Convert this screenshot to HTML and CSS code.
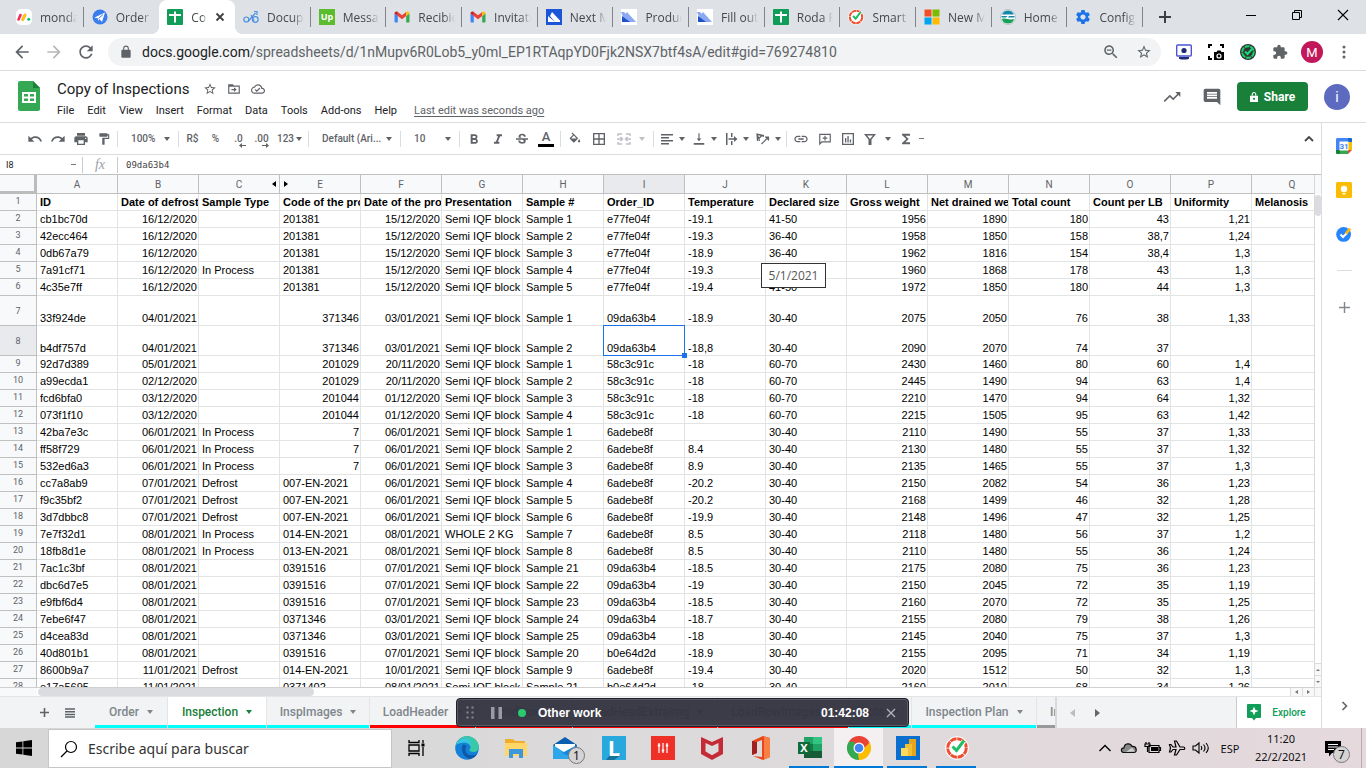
FILE: index.html
```html
<!DOCTYPE html>
<html lang="en">
<head>
<meta charset="utf-8">
<title>Copy of Inspections</title>
<link rel="stylesheet" href="styles.css">
</head>
<body>

<svg class="defs" aria-hidden="true">
  <symbol id="gmail" viewBox="0 0 16 16"><path fill="#4285f4" d="M1 13.500h2.800V7L0.500 4.500v8.300z"/><path fill="#34a853" d="M12.200 13.500H15l.5-.7V4.500L12.200 7z"/><path fill="#ea4335" d="M3.800 7V3L8 6.200 12.200 3v4L8 10.200z"/><path fill="#c5221f" d="M.5 4.500C.5 2.800 2.300 2 3.800 3v4z"/><path fill="#fbbc04" d="M15.500 4.500c0-1.700-1.800-2.500-3.300-1.500v4z"/></symbol>
  <symbol id="sheets" viewBox="0 0 16 16"><rect width="16" height="16" rx="1" fill="#0f9d58"/><path fill="#fff" d="M7 2.500h2V5h5v2H9v6.500H7V7H2V5h5z"/></symbol>
  <symbol id="boat" viewBox="0 0 16 16"><path fill="#8ba9f2" d="M6 3l9 10H8L3 7zM0 3l3 0 9 10H4z"/><path fill="#1f52c8" d="M1 7l8 6H1z"/></symbol>
  <symbol id="clockcheck" viewBox="0 0 24 24"><circle cx="12" cy="12" r="11.800" fill="#fff"/><circle cx="12" cy="12" r="9.300" fill="none" stroke="#f04e30" stroke-width="3" stroke-dasharray="6.600 .7"/><path d="M7.500 11l4 4L19 5" fill="none" stroke="#fff" stroke-width="5"/><path d="M7.500 10.500l4 4L19 4.500" fill="none" stroke="#1fbf63" stroke-width="3"/></symbol>
  <symbol id="star" viewBox="0 0 24 24"><path d="M22 9.240l-7.190-.62L12 2 9.190 8.630 2 9.240l5.460 4.730L5.820 21 12 17.270 18.180 21l-1.630-7.030L22 9.240zM12 15.400l-3.760 2.270 1-4.280-3.320-2.880 4.380-.38L12 6.100l1.710 4.040 4.380.38-3.320 2.880 1 4.280L12 15.400z"/></symbol>
  <symbol id="lock" viewBox="0 0 24 24"><path d="M18 8h-1V6c0-2.760-2.240-5-5-5S7 3.240 7 6v2H6c-1.100 0-2 .9-2 2v10c0 1.100.9 2 2 2h12c1.100 0 2-.9 2-2V10c0-1.100-.9-2-2-2zM15.100 8H8.900V6c0-1.710 1.390-3.100 3.100-3.100 1.710 0 3.100 1.390 3.100 3.100v2z"/></symbol>
</svg>

<header class="tabstrip">
  <nav class="tabs" aria-label="Browser tabs">
    <a class="tab" href="#"><svg class="fav" viewBox="0 0 16 16"><rect width="16" height="16" rx="5" fill="#fff"/><path d="M2.500 10.500L4.500 6M6.800 10.500L9 6" stroke-linecap="round" stroke-width="2.600" stroke="#f62b54"/><path d="M6.800 10.500L9 6" stroke-linecap="round" stroke-width="2.600" stroke="#ffcb00"/><circle cx="12.700" cy="10.300" r="1.500" fill="#00ca72"/></svg><span>monday</span></a>
    <a class="tab last-before" href="#"><svg class="fav" viewBox="0 0 16 16"><circle cx="8" cy="8" r="7.500" fill="#3b7ded"/><path fill="#fff" d="M2.500 8.500L13 3.500 10 13 7.500 10 6 12V9.500z"/><path stroke="#3b7ded" d="M6.500 9.500L11 5.500"/></svg><span>Order I</span></a>
    <a class="tab active" href="#" aria-current="page"><svg class="fav"><use href="#sheets"/></svg><span>Copy</span><svg class="close" viewBox="0 0 10 10"><path d="M1.500 1.500l7 7M8.500 1.500l-7 7" stroke="#3c4043" stroke-width="1.800"/></svg></a>
    <a class="tab" href="#"><svg class="fav" viewBox="0 0 16 16" fill="none" stroke="#4a90e2" stroke-width="1.200"><circle cx="3.300" cy="10.500" r="2.500"/><circle cx="12.300" cy="10.500" r="2.800"/><path d="M5 12.500L12.500 4M8 6l3 6M11 2.500h3V6"/></svg><span>Docupil</span></a>
    <a class="tab" href="#"><svg class="fav" viewBox="0 0 16 16"><rect width="16" height="16" fill="#5bbc2e"/><text x="8" y="11" text-anchor="middle" class="up">Up</text></svg><span>Messag</span></a>
    <a class="tab" href="#"><svg class="fav"><use href="#gmail"/></svg><span>Recibid</span></a>
    <a class="tab" href="#"><svg class="fav"><use href="#gmail"/></svg><span>Invitati</span></a>
    <a class="tab" href="#"><svg class="fav" viewBox="0 0 16 16"><rect width="16" height="16" fill="#1b55d8"/><path fill="#fff" d="M6 3l8 8.500V13H9L4 7zM2 7l7 6H2z"/></svg><span>Next M</span></a>
    <a class="tab" href="#"><svg class="fav" viewBox="0 0 16 16"><rect width="16" height="16" fill="#fff"/><use href="#boat"/></svg><span>Produc</span></a>
    <a class="tab" href="#"><svg class="fav" viewBox="0 0 16 16"><rect width="16" height="16" fill="#fff"/><use href="#boat"/></svg><span>Fill out</span></a>
    <a class="tab" href="#"><svg class="fav"><use href="#sheets"/></svg><span>Roda P</span></a>
    <a class="tab" href="#"><svg class="fav"><use href="#clockcheck"/></svg><span>Smart</span></a>
    <a class="tab" href="#"><svg class="fav" viewBox="0 0 16 16"><path fill="#f25022" d="M.5.5h7v7h-7z"/><path fill="#7fba00" d="M8.500.5h7v7h-7z"/><path fill="#00a4ef" d="M.5 8.500h7v7h-7z"/><path fill="#ffb900" d="M8.500 8.500h7v7h-7z"/></svg><span>New M</span></a>
    <a class="tab" href="#"><svg class="fav" viewBox="0 0 16 16"><circle cx="8" cy="8" r="7.500" fill="#fff" stroke="#9aa" stroke-width=".6"/><path fill="#1787a8" d="M2 5.500a6.500 6.500 0 0 1 12 0zM1.500 7h6l-1.500 1.500h-4.500zM9 7h5.500v1.500H8z"/><path fill="#17a05a" d="M1.800 10c4-1.500 7 1.500 12.400 0a6.500 6.500 0 0 1-12.400 0z"/></svg><span>Home</span></a>
    <a class="tab" href="#"><svg class="fav" viewBox="1 1 22 22"><path fill="#1a73e8" d="M19.140 12.940c.04-.3.06-.61.06-.94 0-.32-.02-.64-.07-.94l2.030-1.580c.18-.14.23-.41.12-.61l-1.920-3.320c-.12-.22-.37-.29-.59-.22l-2.390.96c-.5-.38-1.030-.7-1.620-.94l-.36-2.540c-.04-.24-.24-.41-.48-.41h-3.840c-.24 0-.43.17-.47.41l-.36 2.540c-.59.24-1.130.57-1.620.94l-2.390-.96c-.22-.08-.47 0-.59.22L2.740 8.870c-.12.21-.08.47.12.61l2.030 1.580c-.05.3-.09.63-.09.94s.02.64.07.94l-2.030 1.580c-.18.14-.23.41-.12.61l1.920 3.320c.12.22.37.29.59.22l2.390-.96c.5.38 1.030.7 1.620.94l.36 2.540c.05.24.24.41.48.41h3.840c.24 0 .44-.17.47-.41l.36-2.540c.59-.24 1.130-.56 1.620-.94l2.390.96c.22.08.47 0 .59-.22l1.920-3.320c.12-.22.07-.47-.12-.61l-2.010-1.580zM12 15.600c-1.980 0-3.600-1.620-3.600-3.600s1.620-3.600 3.600-3.600 3.600 1.620 3.600 3.600-1.620 3.600-3.600 3.600z"/></svg><span>Config</span></a>
  </nav>
  <div class="strip-end">
    <button class="newtab" aria-label="New tab"><svg width="12" height="12" viewBox="0 0 12 12"><path d="M6 0v12M0 6h12" stroke="#3c4043" stroke-width="2"/></svg></button>
    <div class="wincontrols">
      <button aria-label="Minimize"><svg width="12" height="12" viewBox="0 0 12 12"><path d="M1 6.500h10" stroke="#000"/></svg></button>
      <button aria-label="Restore"><svg width="12" height="12" viewBox="0 0 12 12" fill="none" stroke="#000"><path d="M1.500 3.500h7v7h-7zM3.500 3.500v-2h7v7h-2"/></svg></button>
      <button aria-label="Close"><svg width="12" height="12" viewBox="0 0 12 12"><path d="M1 1l10 10M11 1L1 11" stroke="#000" stroke-width="1.100"/></svg></button>
    </div>
  </div>
</header>

<div class="addressrow">
  <div class="navbuttons">
    <button aria-label="Back"><svg class="i20" viewBox="0 0 24 24"><path d="M20 11H7.830l5.590-5.590L12 4l-8 8 8 8 1.410-1.410L7.830 13H20v-2z"/></svg></button>
    <button aria-label="Forward"><svg class="i20 pale" viewBox="0 0 24 24"><path d="M12 4l-1.410 1.410L16.170 11H4v2h12.170l-5.580 5.590L12 20l8-8z"/></svg></button>
    <button aria-label="Reload"><svg class="i20" viewBox="0 0 24 24"><path d="M17.650 6.350C16.200 4.900 14.210 4 12 4c-4.420 0-7.990 3.580-7.990 8s3.570 8 7.990 8c3.730 0 6.840-2.550 7.730-6h-2.080c-.82 2.330-3.040 4-5.650 4-3.310 0-6-2.690-6-6s2.690-6 6-6c1.660 0 3.140.69 4.220 1.780L13 11h7V4l-2.350 2.350z"/></svg></button>
  </div>
  <div class="omnibox">
    <svg class="i14"><use href="#lock"/></svg>
    <label class="domain" for="url">docs.google.com</label>
    <input id="url" type="text" value="/spreadsheets/d/1nMupv6R0Lob5_y0ml_EP1RTAqpYD0Fjk2NSX7btf4sA/edit#gid=769274810">
    <button aria-label="Zoom"><svg class="i18" viewBox="0 0 24 24"><path d="M15.500 14h-.79l-.28-.27C15.410 12.590 16 11.110 16 9.500 16 5.910 13.090 3 9.500 3S3 5.910 3 9.500 5.910 16 9.500 16c1.610 0 3.090-.59 4.230-1.570l.27.28v.79l5 4.990L20.490 19l-4.990-5zm-6 0C7.010 14 5 11.990 5 9.500S7.010 5 9.500 5 14 7.010 14 9.500 11.990 14 9.500 14zM6.500 8.800h6v1.400h-6z"/></svg></button>
    <button aria-label="Bookmark"><svg class="i16"><use href="#star"/></svg></button>
  </div>
  <div class="extensions">
    <button aria-label="Screen recorder"><svg class="i16" viewBox="0 0 16 16"><rect x=".7" y="1" width="14.600" height="11" rx="1" fill="#fff" stroke="#4b56d2" stroke-width="1.400"/><circle cx="8" cy="6.500" r="2.600" fill="#1d2a7a"/><path fill="#1d2a7a" d="M3 13h10v1.500c0 .8-2 1-5 1s-5-.2-5-1z"/></svg></button>
    <button aria-label="Screenshot"><svg class="i16" viewBox="0 0 16 16"><path d="M1 4V1h3M12 1h3v3M1 12v3h3" fill="none" stroke="#000" stroke-width="2"/><path fill="#000" d="M6 8h2.500l1-1.500h3L13.500 8H16v8H6z"/><circle cx="11" cy="12" r="2" fill="none" stroke="#fff" stroke-width="1.200"/></svg></button>
    <button aria-label="Time tracker"><svg class="i16" viewBox="0 0 16 16"><circle cx="8" cy="8" r="8" fill="#333"/><circle cx="8" cy="8" r="5.800" fill="none" stroke="#17d470" stroke-width="2" stroke-dasharray="5 .8"/><path d="M5 7.500l2.500 2.500L12 5" fill="none" stroke="#17e07a" stroke-width="2"/></svg></button>
    <button aria-label="Extensions"><svg class="i16" viewBox="0 0 24 24"><path d="M20.500 11H19V7c0-1.100-.9-2-2-2h-4V3.500C13 2.120 11.880 1 10.500 1S8 2.120 8 3.500V5H4c-1.100 0-1.990.9-1.990 2v3.800H3.500c1.490 0 2.700 1.210 2.700 2.700s-1.210 2.700-2.700 2.700H2V20c0 1.100.9 2 2 2h3.800v-1.500c0-1.490 1.210-2.700 2.700-2.700 1.490 0 2.700 1.210 2.700 2.700V22H17c1.100 0 2-.9 2-2v-4h1.500c1.380 0 2.500-1.120 2.500-2.500S21.880 11 20.500 11z"/></svg></button>
    <button class="profile" aria-label="Profile"><span>M</span></button>
    <button aria-label="Browser menu"><svg class="i16" viewBox="0 0 16 16"><circle cx="8" cy="3" r="1.500"/><circle cx="8" cy="8" r="1.500"/><circle cx="8" cy="13" r="1.500"/></svg></button>
  </div>
</div>

<header class="docheader">
  <svg class="doclogo" viewBox="0 0 22 30"><path fill="#34a853" d="M2 0h13l7 7v21a2 2 0 0 1-2 2H2a2 2 0 0 1-2-2V2a2 2 0 0 1 2-2z"/><path fill="#188038" d="M15 0l7 7h-7z"/><path fill="#fff" fill-rule="evenodd" d="M4 11h14v11H4zM6 13v2.500h4V13zM12 13v2.500h4V13zM6 17.500V20h4v-2.500zM12 17.500V20h4v-2.500z"/></svg>
  <div class="docmeta">
    <div class="titleline">
      <h1>Copy of Inspections</h1>
      <button aria-label="Star"><svg class="i14"><use href="#star"/></svg></button>
      <button aria-label="Move"><svg class="i14" viewBox="0 0 24 24"><path fill-rule="evenodd" d="M2 4h8l2 2h10v14H2zM4 8v10h16V8zM12 9l4.500 4-4.500 4v-3H7.500v-2H12z"/></svg></button>
      <button aria-label="Document status"><svg class="i14" viewBox="0 0 24 24"><path d="M19.350 10.040C18.670 6.590 15.640 4 12 4 9.110 4 6.600 5.640 5.350 8.040 2.340 8.360 0 10.910 0 14c0 3.310 2.690 6 6 6h13c2.760 0 5-2.240 5-5 0-2.640-2.050-4.780-4.650-4.960zM19 18H6c-2.210 0-4-1.790-4-4 0-2.050 1.530-3.760 3.560-3.970l1.070-.11.5-.95C8.080 7.140 9.940 6 12 6c2.620 0 4.880 1.860 5.390 4.430l.3 1.500 1.530.11c1.560.1 2.780 1.410 2.780 2.960 0 1.650-1.350 3-3 3zm-9-3.820l-2.090-2.090L6.500 13.500 10 17l6.010-6.010-1.410-1.410z"/></svg></button>
    </div>
    <nav class="menus" aria-label="Document menus">
      <button>File</button><button>Edit</button><button>View</button><button>Insert</button><button>Format</button><button>Data</button><button>Tools</button><button>Add-ons</button><button>Help</button>
      <a href="#">Last edit was seconds ago</a>
    </nav>
  </div>
  <div class="docactions">
    <button aria-label="Activity"><svg class="i20" viewBox="0 0 24 24"><path d="M16 6l2.290 2.290-4.880 4.880-4-4L2 16.590 3.410 18l6-6 4 4 6.300-6.290L22 12V6z"/></svg></button>
    <button aria-label="Comments"><svg class="i20" viewBox="0 0 24 24"><path d="M21.990 4c0-1.100-.89-2-1.990-2H4c-1.100 0-2 .9-2 2v12c0 1.100.9 2 2 2h14l4 4-.01-18zM18 14H6v-2h12v2zm0-3H6V9h12v2zm0-3H6V6h12v2z"/></svg></button>
    <button class="share"><svg width="8" height="10" viewBox="0 0 9 11"><path fill="#fff" fill-rule="evenodd" d="M0 4h9v7H0zM4.500 6.300a1.200 1.200 0 1 0 .01 0z"/><path d="M2.500 4V2.500a2 2 0 0 1 4 0V4" fill="none" stroke="#fff" stroke-width="1.200"/></svg>Share</button>
    <button class="account" aria-label="Account">i</button>
  </div>
</header>

<main class="workspace">
  <section class="editor">
    <div class="toolbar">
      <button class="tb n" aria-label="Undo"><svg class="i16" viewBox="0 0 24 24"><path d="M12.500 8c-2.650 0-5.050.99-6.900 2.600L2 7v9h9l-3.620-3.620c1.390-1.160 3.160-1.880 5.120-1.880 3.540 0 6.550 2.310 7.600 5.500l2.370-.78C21.080 11.030 17.150 8 12.500 8z"/></svg></button>
      <button class="tb n" aria-label="Redo"><svg class="i16" viewBox="0 0 24 24"><path d="M18.400 10.600C16.550 8.990 14.150 8 11.500 8c-4.650 0-8.580 3.030-9.960 7.220L3.900 16c1.050-3.190 4.050-5.500 7.600-5.500 1.950 0 3.730.72 5.120 1.880L13 16h9V7l-3.600 3.600z"/></svg></button>
      <button class="tb n" aria-label="Print"><svg class="i16" viewBox="0 0 24 24"><path d="M19 8H5c-1.660 0-3 1.340-3 3v6h4v4h12v-4h4v-6c0-1.660-1.340-3-3-3zm-3 11H8v-5h8v5zm3-7c-.55 0-1-.45-1-1s.45-1 1-1 1 .45 1 1-.45 1-1 1zm-1-9H6v4h12V3z"/></svg></button>
      <button class="tb n" aria-label="Paint format"><svg class="i14" viewBox="0 0 24 24"><path d="M18 4V3c0-.55-.45-1-1-1H5c-.55 0-1 .45-1 1v4c0 .55.45 1 1 1h12c.55 0 1-.45 1-1V6h1v4H9v11c0 .55.45 1 1 1h2c.55 0 1-.45 1-1v-9h8V4h-3z"/></svg></button>
      <i class="sep"></i>
      <div class="sel zoomsel"><select aria-label="Zoom"><option>100%</option></select><i class="caret"></i></div>
      <i class="sep"></i>
      <button class="tb n">R$</button>
      <button class="tb n">%</button>
      <button class="tb n dec" aria-label="Decrease decimal places"><span>.0</span><svg width="7" height="5" viewBox="0 0 7 5"><path d="M7 2v1H3v2L0 2.500 3 0v2z"/></svg></button>
      <button class="tb n dec" aria-label="Increase decimal places"><span>.00</span><svg width="7" height="5" viewBox="0 0 7 5"><path d="M0 2v1h4v2l3-2.500L4 0v2z"/></svg></button>
      <button class="tb formats">123<i class="caret"></i></button>
      <i class="sep"></i>
      <div class="sel fontsel"><select aria-label="Font"><option>Default (Ari...</option></select><i class="caret"></i></div>
      <i class="sep"></i>
      <div class="sel sizesel"><select aria-label="Font size"><option>10</option></select><i class="caret"></i></div>
      <i class="sep"></i>
      <button class="tb" aria-label="Bold"><svg class="i16" viewBox="0 0 24 24"><path d="M15.600 11.790c.97-.67 1.650-1.770 1.650-2.790 0-2.260-1.750-4-4-4H7v14h7.040c2.090 0 3.710-1.700 3.710-3.790 0-1.520-.86-2.820-2.150-3.420zM10 7.500h3c.83 0 1.500.67 1.500 1.500s-.67 1.500-1.500 1.500h-3v-3zm3.500 9H10v-3h3.500c.83 0 1.500.67 1.500 1.500s-.67 1.500-1.500 1.500z"/></svg></button>
      <button class="tb" aria-label="Italic"><svg class="i16" viewBox="0 0 24 24"><path d="M10 5v3h2.210l-3.420 8H6v3h8v-3h-2.210l3.420-8H18V5z"/></svg></button>
      <button class="tb" aria-label="Strikethrough"><svg class="i16" viewBox="0 0 24 24"><path d="M6.850 8.080C6.850 5.370 9.450 4 12.240 4c1.640 0 3 .49 3.900 1.280.77.65 1.460 1.730 1.460 3.240h-3.010c0-.31-.05-.59-.15-.85-.29-.86-1.200-1.280-2.250-1.280-1.860 0-2.340 1.020-2.340 1.700 0 .48.25.88.74 1.210.38.25.77.48 1.410.7H7.390c-.21-.34-.54-.89-.54-1.920zM21 13v-2H3v2h9.620c1.150.45 1.960.75 1.960 1.970 0 1-.81 1.670-2.280 1.670-1.540 0-2.930-.54-2.930-2.510H6.400c0 .55.08 1.130.24 1.580.81 2.290 3.290 3.300 5.670 3.300 2.270 0 5.300-.89 5.300-4.050 0-.3-.01-1.160-.48-1.940H21V13z"/></svg></button>
      <button class="tb" aria-label="Text color"><span class="textcolor">A</span></button>
      <i class="sep"></i>
      <button class="tb" aria-label="Fill color"><svg class="i14" viewBox="0 0 24 24"><path d="M16.560 9.940L7.620 1 6.210 2.410l2.380 2.380-5.150 5.150c-.59.59-.59 1.540 0 2.120l5.500 5.500c.29.29.68.44 1.060.44s.77-.15 1.060-.44l5.500-5.500c.59-.58.59-1.530 0-2.120zM5.210 11L10 6.210 14.790 11H5.210zM19 12.500s-2 2.170-2 3.500c0 1.100.9 2 2 2s2-.9 2-2c0-1.330-2-3.500-2-3.500z"/></svg></button>
      <button class="tb" aria-label="Borders"><svg class="i16" viewBox="0 0 24 24"><path d="M3 3v18h18V3H3zm8 16H5v-6h6v6zm0-8H5V5h6v6zm8 8h-6v-6h6v6zm0-8h-6V5h6v6z"/></svg></button>
      <button class="tb merge" aria-label="Merge cells" disabled><svg class="i14" viewBox="0 0 14 14"><path d="M1 4V2h4M9 2h4v2M1 10v2h4M9 12h4v-2M0 7h5M14 7H9M3.500 5l2 2-2 2M10.500 5l-2 2 2 2" fill="none" stroke="#bdc1c6" stroke-width="1.500"/></svg><i class="caret"></i></button>
      <i class="sep"></i>
      <button class="tb drop" aria-label="Horizontal align"><svg class="i14" viewBox="0 0 14 14"><path d="M1 2h12v1.500H1zM1 5h8v1.500H1zM1 8h12v1.500H1zM1 11h8v1.500H1z"/></svg><i class="caret"></i></button>
      <button class="tb drop" aria-label="Vertical align"><svg class="i14" viewBox="0 0 24 24"><path d="M16 11h-3V2h-2v9H8l4 5 4-5zM3 19v3h18v-3H3z"/></svg><i class="caret"></i></button>
      <button class="tb drop" aria-label="Text wrapping"><svg class="i14" viewBox="0 0 14 14"><path d="M2 1h1.500v12H2zM7 1h1.500v4H7zM7 9h1.500v4H7zM4.500 6.300H10V4l3.500 3L10 10V7.700H4.500z"/></svg><i class="caret"></i></button>
      <button class="tb drop" aria-label="Text rotation"><svg class="i14" viewBox="0 0 14 14" fill="none" stroke="#5f6368" stroke-width="1.200"><path d="M1.500 9L1 2l7 1.500L1.500 2.500M1.200 2.200L3.500 9M1.200 2.200L8 4.500M2.800 6.500l3-3M5.500 12L12 5.500M9 5h3.500v3.500"/></svg><i class="caret"></i></button>
      <i class="sep"></i>
      <button class="tb" aria-label="Insert link"><svg class="i16" viewBox="0 0 24 24"><path d="M3.900 12c0-1.710 1.390-3.100 3.100-3.100h4V7H7c-2.760 0-5 2.240-5 5s2.240 5 5 5h4v-1.900H7c-1.710 0-3.100-1.390-3.100-3.100zM8 13h8v-2H8v2zm9-6h-4v1.900h4c1.710 0 3.100 1.390 3.100 3.100s-1.390 3.100-3.100 3.100h-4V17h4c2.760 0 5-2.240 5-5s-2.240-5-5-5z"/></svg></button>
      <button class="tb n" aria-label="Insert comment"><svg class="i14" viewBox="0 0 24 24"><path fill-rule="evenodd" d="M2 3h20v15H7l-5 5zM4 5v13l2-2h14V5zM11 6.500h2v3h3v2h-3v3h-2v-3H8v-2h3z"/></svg></button>
      <button class="tb n" aria-label="Insert chart"><svg class="i14" viewBox="0 0 14 14"><path fill-rule="evenodd" d="M1 1h12v12H1zM2.300 2.300v9.400h9.400V2.300zM4 6h1.300v4.500H4zM6.400 4h1.300v6.500H6.400zM8.800 7.500h1.300v3H8.800z"/></svg></button>
      <button class="tb filter" aria-label="Create a filter"><svg class="i14" viewBox="0 0 14 14"><path fill-rule="evenodd" d="M1 2h12L8.500 7.500V13h-3V7.500zM4 3.500l3 3.500 3-3.500z"/></svg><i class="caret"></i></button>
      <button class="tb drop" aria-label="Functions"><svg class="i16" viewBox="0 0 24 24"><path d="M18 4H6v2l6.500 6L6 18v2h12v-3h-7l5-5-5-5h7z"/></svg><i class="dash"></i></button>
      <button class="tb collapse" aria-label="Hide the menus"><svg width="10" height="7" viewBox="0 0 10 7"><path d="M1 6l4-4 4 4" fill="none" stroke="#444746" stroke-width="1.800"/></svg></button>
    </div>

    <div class="formulabar">
      <input class="namebox" type="text" aria-label="Name box" value="I8">
      <i class="dash"></i>
      <span class="fx">fx</span>
      <input class="formula" type="text" aria-label="Formula" value="09da63b4">
    </div>

    <div class="sheetarea">
      <div class="gridview">
        <table class="grid"><thead id="cols"></thead><tbody id="rows"></tbody></table>
        <div class="celltip" role="tooltip">5/1/2021</div>
      </div>
      <div class="vscroll"><i class="vhead"></i><i class="vthumb"></i><button aria-label="Scroll up"><i class="tri up3"></i></button><button aria-label="Scroll down"><i class="tri down3"></i></button></div>
      <div class="hscroll"><i class="hcorner"></i><i class="hthumb"></i><button aria-label="Scroll left"><i class="tri left3"></i></button><button aria-label="Scroll right"><i class="tri right3"></i></button></div>
      <i class="scorner"></i>
    </div>

    <footer class="sheetbar">
      <div class="sheettools">
        <button aria-label="Add sheet"><svg width="9" height="9" viewBox="0 0 9 9"><path d="M4.500 0v9M0 4.500h9" stroke="#5f6368" stroke-width="1.600"/></svg></button>
        <button aria-label="All sheets"><svg width="10" height="10" viewBox="0 0 10 10"><path d="M0 1h10M0 3.700h10M0 6.400h10M0 9h10" stroke="#5f6368" stroke-width="1.500"/></svg></button>
      </div>
      <nav class="sheettabs" aria-label="Sheets">
        <button class="sheet w1">Order<i class="caret"></i></button>
        <button class="sheet current w2">Inspection<i class="caret"></i></button>
        <button class="sheet w3">InspImages<i class="caret"></i></button>
        <button class="sheet red w4">LoadHeader<i class="caret"></i></button>
        <button class="sheet red w5">LoadRow<i class="caret"></i></button>
        <button class="sheet red w6">LoadHeadExtraImg<i class="caret"></i></button>
        <button class="sheet red w7">LoadRowImages<i class="caret"></i></button>
        <button class="sheet w8">Lots<i class="caret"></i></button>
        <button class="sheet w9">Inspection Plan<i class="caret"></i></button>
        <button class="sheet gray w10">Inventory<i class="caret"></i></button>
      </nav>
      <div class="sheetnav">
        <button aria-label="Previous sheets"><i class="tri prev"></i></button>
        <button aria-label="Next sheets"><i class="tri next"></i></button>
      </div>
      <button class="explore"><svg width="16" height="17" viewBox="0 0 16 17"><path fill="#0f9d58" d="M2 0h12a1 1 0 0 1 1 1v12a1 1 0 0 1-1 1h-4l-2 2.500L6 14H2a1 1 0 0 1-1-1V1a1 1 0 0 1 1-1z"/><path fill="#fff" d="M8 2.500l1.300 3.200L12.500 7 9.300 8.300 8 11.500 6.700 8.300 3.500 7l3.200-1.300z"/></svg>Explore</button>
      <div class="timer" role="status">
        <svg width="8" height="13" viewBox="0 0 8 13" fill="#7c7c88"><circle cx="1.500" cy="1.500" r="1.200"/><circle cx="6.500" cy="1.500" r="1.200"/><circle cx="1.500" cy="6.500" r="1.200"/><circle cx="6.500" cy="6.500" r="1.200"/><circle cx="1.500" cy="11.500" r="1.200"/><circle cx="6.500" cy="11.500" r="1.200"/></svg>
        <button aria-label="Pause"><svg width="11" height="12" viewBox="0 0 11 12"><path fill="#9a9aa4" d="M0 0h3.500v12H0zM7.500 0H11v12H7.500z"/></svg></button>
        <i class="dot"></i>
        <strong>Other work</strong>
        <strong class="time">01:42:08</strong>
        <button aria-label="Dismiss"><svg width="10" height="10" viewBox="0 0 10 10"><path d="M1 1l8 8M9 1L1 9" stroke="#b4b4bc" stroke-width="1.200"/></svg></button>
      </div>
    </footer>
  </section>

  <aside class="side">
    <button aria-label="Calendar"><svg class="i16" viewBox="0 0 16 16"><path fill="#4285f4" d="M1 0h11v4H4v8H0V1z"/><path fill="#1967d2" d="M12 0h3a1 1 0 0 1 1 1v3h-4z"/><path fill="#fbbc04" d="M12 4h4v8h-4z"/><path fill="#34a853" d="M4 12h8v4H4z"/><path fill="#188038" d="M0 12h4v4H1a1 1 0 0 1-1-1z"/><path fill="#ea4335" d="M12 12h4l-4 4z"/><path fill="#fff" d="M3.500 3.500h9v9h-9z"/><text x="8" y="11" text-anchor="middle" class="cal">31</text></svg></button>
    <button aria-label="Keep"><svg class="i16" viewBox="0 0 16 16"><rect width="16" height="16" rx="1.500" fill="#fbbc04"/><circle cx="8" cy="7" r="3.200" fill="#fff"/><path fill="#fff" d="M6.500 11h3v1.500h-3z"/></svg></button>
    <button aria-label="Tasks"><svg class="i16" viewBox="0 0 16 16"><circle cx="7.600" cy="8.400" r="7.400" fill="#2684fc"/><path d="M4.500 8.500l2.500 2.500 4-4" fill="none" stroke="#fff" stroke-width="2"/><path d="M10 7.700l4-5.200" stroke="#ffba00" stroke-width="2.800"/></svg></button>
    <hr>
    <button aria-label="Get add-ons"><svg width="11" height="11" viewBox="0 0 11 11"><path d="M5.500 0v11M0 5.500h11" stroke="#80868b" stroke-width="1.400"/></svg></button>
    <button class="hide" aria-label="Hide side panel"><svg width="7" height="10" viewBox="0 0 7 10"><path d="M1.500 1l4 4-4 4" fill="none" stroke="#5f6368" stroke-width="1.600"/></svg></button>
  </aside>
</main>

<footer class="taskbar">
  <button class="start" aria-label="Start"><svg width="16" height="16" viewBox="0 0 16 16"><path d="M0 2.300L6.500 1.400v6.200H0zM7.300 1.300L16 0v7.600H7.300zM0 8.400h6.500v6.200L0 13.700zM7.300 8.400H16V16l-8.700-1.300z"/></svg></button>
  <div class="search">
    <svg width="18" height="18" viewBox="0 0 18 18"><circle cx="11" cy="7" r="5.500" fill="none" stroke="#000" stroke-width="1.200"/><path d="M7 11l-6 6" stroke="#000" stroke-width="1.200"/></svg>
    <input type="text" aria-label="Buscar" placeholder="Escribe aquí para buscar">
  </div>
  <button class="app" aria-label="Task view"><svg width="17" height="16" viewBox="0 0 17 16"><path d="M1 0v2.500h10V0M1 16v-2.500h10V16M1 5h10v6H1zM15 0v3M15 7v9" fill="none" stroke="#000" stroke-width="1.300"/><path d="M13.500 3.500h3v3h-3z"/></svg></button>
  <div class="apps">
    <button class="app" aria-label="Edge"><svg width="24" height="24" viewBox="0 0 24 24"><circle cx="12" cy="12" r="11.800" fill="#1481d8"/><path fill="#38c9a6" d="M1 9C3 2.500 8 .2 12 .2 19 .2 23.800 5.500 23.800 11c0 3-2.500 5-5.500 5-2 0-3.800-.6-3.800-1.700 0-.8 1-1.300 1-3C15.500 8 11 6 7 6.500 4 7 2 8 1 9z"/><path fill="#35c4ea" d="M1 9c2-5 7-7.300 11-6 3 1 5 4 4.500 7.500C15 7 11 5.500 8 6.500 4 7 2 8 1 9z"/><path fill="#0f5aa8" d="M8 8.500c-3 5 0 13 7 14.500 3-.6 5.500-2.500 7-5-5 2.500-11 1-11.500-3.500-.2-2 .5-3.500 1.500-4.200C10.500 9 9 8.500 8 8.500z"/></svg></button>
    <button class="app" aria-label="File Explorer"><svg width="24" height="24" viewBox="0 0 24 24"><path fill="#f0ad2e" d="M1 3h8l2 2h10v4H1z"/><path fill="#ffd667" d="M1 7h22v13H1z"/><path fill="#3c97dc" d="M5 13h14v9h-4v-4H9v4H5z"/></svg></button>
    <button class="app badge" aria-label="Mail"><svg width="24" height="24" viewBox="0 0 24 24"><path fill="#0a5fb0" d="M0 9L12 1l12 8v13H0z"/><path fill="#fff" d="M2 8h20v4l-10 6-10-6z"/><path fill="#2fa6ea" d="M0 9l14 9 10 5H0z"/><path fill="#1787d8" d="M24 9v14L9 17z"/></svg><b>1</b></button>
    <button class="app" aria-label="Lenovo"><svg width="24" height="24" viewBox="0 0 24 24"><path fill="#27a9dd" d="M0 0h24v24H0z"/><path fill="#17729a" d="M10 16l9 3-7 5H4z"/><text x="12" y="20" text-anchor="middle" class="ell">L</text></svg></button>
    <button class="app" aria-label="Mixer"><svg width="24" height="24" viewBox="0 0 24 24"><path fill="#ee3127" d="M0 0h24v24H0z"/><path d="M8 7v10M12 7v10M16 7v10" stroke="#fff" stroke-width="1.200"/><path d="M6.800 9.500h2.400M10.800 14.500h2.400M14.800 9.500h2.400" stroke="#fff" stroke-width="1.800"/></svg></button>
    <button class="app" aria-label="McAfee"><svg width="24" height="24" viewBox="0 0 24 24"><path fill="#c42b36" fill-rule="evenodd" d="M1 1l11 5 11-5v17l-11 6-11-6zM5.500 7v8.500L12 19.200l6.500-3.700V7L12 10z"/></svg></button>
    <button class="app" aria-label="Office"><svg width="24" height="24" viewBox="0 0 24 24"><path fill="#e8471c" d="M3 5l11-5 7 2v19l-7 3-10-4 9 1V4L8 6v11l-5 2z"/><path fill="#a02020" d="M3 5l5 1v11l-5 2z"/><path fill="#f98044" d="M15 .5L21 2v19l-6 2.500z"/></svg></button>
    <button class="app open" aria-label="Excel"><svg width="26" height="24" viewBox="0 0 26 24"><path fill="#185c37" d="M7 1h18v21H7z"/><path fill="#21a366" d="M7 1h9v7H7z"/><path fill="#33c481" d="M16 1h9v7h-9z"/><path fill="#107c41" d="M7 8h9v7H7z"/><path fill="#21a366" d="M16 8h9v7h-9z"/><path fill="#0e6a38" d="M1 6h12v12H1z"/><text x="7" y="16" text-anchor="middle" class="ex">X</text></svg></button>
    <button class="app open focus" aria-label="Chrome"><svg width="24" height="24" viewBox="0 0 24 24"><path fill="#ea4335" d="M12 12L1.600 6A12 12 0 0 1 22.400 6z"/><path fill="#fbbc04" d="M12 12L22.400 6A12 12 0 0 1 12 24z"/><path fill="#34a853" d="M12 12v12A12 12 0 0 1 1.600 6z"/><path fill="#ea4335" d="M12 6.600h10.700L17 12z"/><path fill="#fbbc04" d="M16.700 14.700L12 24l-1-6z"/><path fill="#34a853" d="M7.300 14.700L1.600 6l6-.5z"/><circle cx="12" cy="12" r="5.500" fill="#fff"/><circle cx="12" cy="12" r="4.300" fill="#4285f4"/></svg></button>
    <button class="app open" aria-label="Power BI"><svg width="24" height="24" viewBox="0 0 24 24"><path fill="#0b6fd0" d="M0 0h24v24H0z"/><path fill="#e6a51c" d="M13 3h7v17h-7z"/><path fill="#f2c035" d="M9 8h7v12H9z"/><path fill="#ffd95c" d="M5 12h7v8H5z"/></svg></button>
    <button class="app open" aria-label="Smart tracker"><svg width="24" height="24"><use href="#clockcheck"/></svg></button>
  </div>
  <div class="tray">
    <button aria-label="Show hidden icons"><svg width="14" height="14" viewBox="0 0 14 14"><path d="M1.500 10L7 4.500 12.500 10" fill="none" stroke="#000" stroke-width="1.400"/></svg></button>
    <button aria-label="OneDrive"><svg width="18" height="14" viewBox="0 0 18 14"><path fill="#888" stroke="#111" stroke-width="1.200" d="M4 11.500C.5 11.500.5 7 4 6.800 4.500 2 10.500 1.500 12 5.500c5-.5 5.500 6 2 6z"/><path fill="#fff" d="M6 11l6-4.500 3 4z" opacity=".6"/></svg></button>
    <button aria-label="Battery"><svg width="18" height="14" viewBox="0 0 18 14"><path d="M5 4.500h10v7H5zM15 6.500h1.500v3H15M2 1v2M5 1v2M1 3h5v2.500H1zM3.500 5v6" fill="none" stroke="#000" stroke-width="1.200"/><path d="M7 6h7v4H7z"/></svg></button>
    <button aria-label="Airplane mode"><svg width="18" height="16" viewBox="0 0 18 16"><path d="M1.500 4.500h1.500l2 2.500h3L6.500 1H8.500l3.500 6h3.500a1.200 1.200 0 0 1 0 2.500H12l-3.500 5.500h-2L8 9.500H5L3 12H1.500l1-4z" fill="none" stroke="#000" stroke-width="1.200"/></svg></button>
    <button aria-label="Volume"><svg width="18" height="14" viewBox="0 0 18 14"><path d="M1 5h2.500L7 2v10L3.500 9H1zM9 5c1 1.300 1 2.700 0 4M11.500 3.500c2 2.300 2 4.700 0 7M14 2c3 3.300 3 6.700 0 10" fill="none" stroke="#000" stroke-width="1.100"/></svg></button>
    <button class="lang">ESP</button>
    <button class="clock"><span>11:20</span><span>22/2/2021</span></button>
    <button class="notes badge" aria-label="Notifications"><svg width="17" height="17" viewBox="0 0 17 17"><path d="M0 1h16v12H7l-3 3.500V13H0z"/><path d="M3 4.500h10M3 7h10M3 9.500h6" stroke="#fff" stroke-width="1.200"/></svg><b>7</b></button>
  </div>
  <button class="desktop" aria-label="Show desktop"></button>
</footer>
<script src="app.js"></script>
</body>
</html>
```
FILE: styles.css
```css
* { box-sizing: border-box; }
html, body { height: 100%; }
body {
  margin: 0;
  display: flex;
  flex-direction: column;
  overflow: hidden;
  background: #fff;
  color: #202124;
  font-family: Roboto, "Liberation Sans", sans-serif;
  font-size: 12px;
}
button, input, select { font: inherit; color: inherit; border: 0; padding: 0; margin: 0; background: none; outline: 0; }
button { display: flex; align-items: center; justify-content: center; flex: none; }
a { color: inherit; text-decoration: none; }
svg { flex: none; display: block; }
.defs { display: none; }
.i14 { width: 14px; height: 14px; fill: #5f6368; }
.i16 { width: 16px; height: 16px; fill: #5f6368; }
.i18 { width: 18px; height: 18px; fill: #5f6368; }
.i20 { width: 20px; height: 20px; fill: #5f6368; }
.pale { fill: #b6b8bb; }
.up { font: bold 9px "Open Sans", sans-serif; fill: #fff; }
.cal { font: bold 8px Roboto, sans-serif; fill: #4285f4; }
.ell { font: bold 22px "Open Sans", sans-serif; fill: #fff; }
.ex { font: bold 11px "Open Sans", sans-serif; fill: #fff; }
.caret { flex: none; border: 3px solid transparent; border-top: 4px solid #5f6368; border-bottom: 0; }
.dash { flex: none; width: 5px; height: 1px; background: #777; }

/* Browser tabs */
.tabstrip { display: flex; flex: none; height: 34px; background: #dee1e6; font-family: "Open Sans", sans-serif; color: #45494d; }
.tabs { display: flex; flex: 1; min-width: 0; padding-left: 8px; }
.tab { display: flex; align-items: center; flex: 1 1 0; min-width: 0; padding: 0 7px 0 8px; gap: 8px; position: relative; }
.tab span { flex: 1; overflow: hidden; white-space: nowrap; -webkit-mask-image: linear-gradient(90deg, #000 70%, transparent); mask-image: linear-gradient(90deg, #000 70%, transparent); }
.tab::after { content: ""; position: absolute; right: 0; top: 7px; width: 1px; height: 20px; background: #808388; }
.tab.last-before::after, .tab.active::after { display: none; }
.tab.active { background: #fff; border-radius: 8px 8px 0 0; }
.tab.active::before { content: ""; position: absolute; bottom: 0; left: -8px; right: -8px; height: 8px; background: radial-gradient(circle at 0 0, transparent 8px, #fff 8px) left / 8px 8px no-repeat, radial-gradient(circle at 100% 0, transparent 8px, #fff 8px) right / 8px 8px no-repeat; }
.fav { width: 16px; height: 16px; }
.close { width: 10px; height: 10px; margin-right: 3px; }
.strip-end { display: flex; flex: none; justify-content: space-between; width: 223px; }
.newtab { width: 44px; }
.wincontrols { display: flex; height: 29px; }
.wincontrols button { width: 46px; }

/* Address row */
.addressrow { display: flex; align-items: center; flex: none; height: 37px; border-bottom: 1px solid #dadce0; padding: 0 6px; }
.navbuttons { display: flex; }
.navbuttons button, .extensions button { width: 32px; height: 28px; }
.omnibox { display: flex; align-items: center; flex: 1; height: 28px; margin: 0 7px 0 6px; padding: 0 1px 0 11px; border-radius: 14px; background: #f1f3f4; font-family: Roboto, sans-serif; font-size: 14px; color: #5f6368; }
.omnibox input { flex: 1; min-width: 0; }
.omnibox button { width: 33px; height: 28px; }
.domain { margin-left: 9px; color: #202124; }
.extensions { display: flex; }
.profile span { display: grid; place-items: center; width: 22px; height: 22px; border-radius: 50%; background: #c2185b; color: #fff; font-size: 13px; }

/* Document header */
.docheader { display: flex; flex: none; height: 52px; border-bottom: 1px solid #dadce0; padding: 0 16px 0 18px; }
.doclogo { width: 22px; height: 30px; margin-top: 10px; }
.docmeta { flex: 1; margin-left: 17px; padding-top: 7px; }
.titleline { display: flex; align-items: center; height: 22px; gap: 10px; }
.titleline h1 { margin: 0 4px 0 0; font: 400 15px Roboto, sans-serif; }
.menus { display: flex; align-items: center; height: 20px; gap: 13px; font-size: 11px; }
.menus a { margin-left: 4px; color: #5f6368; text-decoration: underline; text-underline-offset: 2px; }
.docactions { display: flex; align-items: center; }
.docactions button { width: 40px; }
.docactions .share { width: 71px; height: 29px; margin: 0 16px 0 5px; gap: 6px; border-radius: 4px; background: #188038; color: #fff; font-size: 12px; font-weight: 700; }
.docactions .account { width: 26px; height: 26px; border-radius: 50%; background: #5c6bc0; color: #fff; font-size: 14px; }

/* Editor */
.workspace { display: flex; flex: 1; min-height: 0; }
.editor { display: flex; flex-direction: column; flex: 1; min-width: 0; }
.toolbar { display: flex; align-items: center; flex: none; height: 32px; padding-left: 23px; border-bottom: 1px solid #dadce0; color: #5f6368; font-size: 10px; font-weight: 500; }
.tb { width: 24px; height: 24px; }
.tb.n { width: 23px; }
.sep { flex: none; width: 1px; height: 16px; margin: 0 2px; background: #dadce0; }
.sel { display: flex; align-items: center; flex: none; height: 24px; padding: 0 6px 0 11px; }
.sel select { flex: 1; min-width: 0; appearance: none; }
.zoomsel { width: 56px; }
.fontsel { width: 87px; }
.sizesel { width: 54px; }
.tb.dec { flex-direction: column; align-items: center; }
.dec span { line-height: 9px; padding-top: 4px; }
.dec svg { align-self: flex-end; margin-right: 4px; fill: #5f6368; }
.tb.formats { width: 33px; gap: 2px; }
.textcolor { width: 16px; border-bottom: 3px solid #000; font-size: 13px; line-height: 14px; }
.tb.merge { width: 40px; gap: 8px; }
.merge .caret { border-top-color: #bdc1c6; }
.tb.drop { width: 32px; gap: 5px; justify-content: flex-start; padding-left: 4px; }
.tb.filter { width: 35px; gap: 8px; }
.tb.collapse { margin-left: auto; }
.formulabar { display: flex; align-items: center; flex: none; height: 19px; }
.namebox { width: 71px; padding-left: 6px; font-size: 9px; }
.fx { width: 36px; margin-left: 6px; border: solid #c8cacd; border-width: 0 1px; text-align: center; font: italic 14px/16px "Liberation Serif", serif; color: #9aa0a6; }
.formula { flex: 1; min-width: 0; padding-left: 8px; font: 9px "DejaVu Sans Mono", monospace; color: #444; }

/* Spreadsheet grid */
.sheetarea { display: grid; flex: 1; min-height: 0; grid-template-columns: minmax(0, 1fr) 7px; grid-template-rows: minmax(0, 1fr) 9px; border-top: 1px solid #c0c0c0; }
.gridview { position: relative; overflow: hidden; }
.grid { border-collapse: separate; border-spacing: 0; table-layout: fixed; width: 1333px; font: 11px/15px "Liberation Sans", Arial, sans-serif; color: #000; }
.grid th, .grid td { height: 17px; padding: 0 0 0 3px; overflow: hidden; white-space: nowrap; border: solid #e2e3e3; border-width: 0 1px 1px 0; text-align: left; vertical-align: bottom; }
.grid thead th { position: relative; height: 19px; padding: 0; text-align: center; vertical-align: middle; font: 10px Roboto, sans-serif; color: #5f6368; background: #f8f9fa; border-color: #c0c0c0; }
.grid thead .corner { width: 37px; border-width: 0 3px 3px 0; border-color: #bcbcbc; }
.grid tbody th { padding: 0 0 2px; text-align: center; vertical-align: middle; font: 9px/13px Roboto, sans-serif; color: #5f6368; background: #f8f9fa; border-color: #c0c0c0; }
.grid thead th.on, .grid tbody th.on { background: #e8eaed; }
.grid td.num { text-align: right; padding: 0 1px 0 0; }
.grid .head td { font-weight: 700; }
.grid .tall td, .grid .tall th { height: 30px; line-height: 14px; }
.grid .tall th { padding: 0; }
.grid td.picked { position: relative; overflow: visible; }
.picked::before { content: ""; position: absolute; inset: -1px; border: 1px solid #1a73e8; }
.picked::after { content: ""; position: absolute; right: -3px; bottom: -3px; width: 5px; height: 5px; background: #1a73e8; }
.grid .unhide { position: absolute; top: 6px; border: 3px solid transparent; }
.grid .unhide.l { right: 3px; border-right: 4px solid #000; border-left: 0; }
.grid .unhide.r { left: 4px; border-left: 4px solid #000; border-right: 0; }
.celltip { position: absolute; left: 761px; top: 88px; width: 65px; height: 25px; border: 1px solid #333; background: #fff; color: #575757; font: 12px/23px "Open Sans", sans-serif; text-align: center; }
.vscroll { display: flex; flex-direction: column; border-left: 1px solid #d8d8d8; background: #fff; }
.vhead { height: 19px; background: #f8f9fa; }
.vthumb { height: 21px; margin: 1px 0 auto; border-radius: 3px; background: #dadce0; }
.vscroll button { height: 12px; background: #f8f8f8; border-top: 1px solid #dcdcdc; }
.hscroll { display: flex; border-top: 1px solid #d0d0d0; }
.hcorner { width: 37px; background: #f8f9fa; }
.hthumb { flex: none; width: 21%; margin: 0 auto 0 1px; border-radius: 4px; background: #dadce0; }
.hscroll button { width: 12px; background: #f8f8f8; border-left: 1px solid #dcdcdc; }
.scorner { background: #f8f8f8; border: solid #dcdcdc; border-width: 1px 0 0 1px; }
.tri { border: 2px solid transparent; }
.up3 { border-bottom-color: #777; border-top: 0; }
.down3 { border-top-color: #777; border-bottom: 0; }
.left3 { border-right: 3px solid #777; border-left: 0; }
.right3 { border-left: 3px solid #777; border-right: 0; }

/* Sheet tabs */
.sheetbar { display: flex; position: relative; flex: none; height: 32px; background: #f1f3f4; border-top: 1px solid #e3e5e7; }
.sheettools { display: flex; flex: none; width: 95px; padding-left: 32px; }
.sheettools button { width: 25px; }
.sheettabs { display: flex; flex: 1; min-width: 0; overflow: hidden; gap: 1px; background: #e3e5e7; }
.sheet { gap: 8px; padding-top: 2px; background: #f1f3f4; border-bottom: 3px solid #00ffff; color: #80868b; font-size: 12px; font-weight: 500; }
.sheet .caret { border-top-color: #80868b; }
.sheet.current { background: #fff; color: #188038; }
.sheet.current .caret { border-top-color: #188038; }
.sheet.red { border-bottom-color: #f00; }
.sheet.gray { border-bottom-color: #999; }
.w1 { width: 72px; }
.w2 { width: 98px; }
.w3 { width: 102px; }
.w4 { width: 105px; }
.w5 { width: 96px; }
.w6 { width: 144px; }
.w7 { width: 130px; }
.w8 { width: 62px; }
.w9 { width: 124px; }
.w10 { width: 90px; }
.sheetnav { display: flex; flex: none; width: 181px; padding-left: 3px; border-left: 2px solid #d8dadd; }
.sheetnav button { width: 25px; }
.sheetnav .tri { border-width: 4px; }
.sheetnav .prev { border-right: 5px solid #bdbdbd; border-left: 0; }
.sheetnav .next { border-left: 5px solid #666; border-right: 0; }
.explore { width: 85px; gap: 10px; padding-right: 6px; background: #fff; border-left: 1px solid #c8cacd; color: #0f9d58; font-size: 10px; font-weight: 500; }
.timer { position: absolute; left: 456px; top: 1px; width: 453px; height: 29px; display: flex; align-items: center; padding: 0 12px 0 9px; border: 1px solid #20202a; border-radius: 4px; background: rgba(49, 49, 63, .95); box-shadow: inset 0 0 0 1px #5b5b68; color: #fff; font: 12px "Liberation Sans", sans-serif; }
.timer button { margin-left: 17px; }
.timer .dot { width: 8px; height: 8px; margin: 0 12px 0 16px; border-radius: 50%; background: #2bc970; }
.timer .time { margin-left: auto; }

/* Side panel */
.side { display: flex; flex-direction: column; align-items: center; flex: none; width: 45px; border-left: 1px solid #dadce0; padding-top: 1px; }
.side button { width: 32px; height: 44px; }
.side hr { width: 15px; margin: 14px 0; border: 0; border-top: 1px solid #dadce0; }
.side .hide { margin-top: auto; }

/* Windows taskbar */
.taskbar { display: flex; flex: none; height: 40px; background: linear-gradient(90deg, #d7d7d7, #dcdadb 50%, #e5d9dd); font-family: "Noto Sans", sans-serif; color: #111; }
.start { width: 48px; }
.search { display: flex; align-items: center; flex: 0 1 344px; margin-top: 1px; padding-left: 11px; gap: 10px; background: #fff; border: 1px solid #c6c6c6; font-size: 14px; }
.search input { flex: 1; min-width: 0; }
.search input::placeholder { color: #333; opacity: 1; }
.app { position: relative; width: 49px; }
.apps { display: flex; margin-left: 1px; }
.app.open::after { content: ""; position: absolute; bottom: 0; left: 4px; right: 5px; height: 2px; background: #0078d7; }
.app.focus { background: #f4f0f2; }
.app.focus::after { left: 0; right: 0; }
.badge { position: relative; }
.badge b { position: absolute; right: 4px; bottom: 4px; width: 17px; height: 17px; border: 1px solid #777; border-radius: 50%; background: #d6d3d5; font: 12px/15px "Noto Sans", sans-serif; text-align: center; }
.tray { display: flex; margin-left: auto; padding-right: 10px; }
.tray button { width: 24px; }
.tray .lang { width: 34px; font-size: 11px; }
.tray .clock { flex-direction: column; width: 68px; font-size: 11px; line-height: 18px; }
.tray .notes { width: 36px; }
.tray .notes b { right: 1px; bottom: 5px; }
.desktop { width: 5px; border-left: 1px solid #b5adb0; }
```
FILE: app.js
```js
const letters = ["A", "B", "C", "E", "F", "G", "H", "I", "J", "K", "L", "M", "N", "O", "P", "Q"];

const titles = "ID|Date of defrosted|Sample Type|Code of the product|Date of the process|Presentation|Sample #|Order_ID|Temperature|Declared size|Gross weight|Net drained weight|Total count|Count per LB|Uniformity|Melanosis";

const data = [
  "cb1bc70d|16/12/2020||'201381|15/12/2020|Semi IQF block|Sample 1|e77fe04f|-19.1|41-50|1956|1890|180|43|1,21",
  "42ecc464|16/12/2020||'201381|15/12/2020|Semi IQF block|Sample 2|e77fe04f|-19.3|36-40|1958|1850|158|38,7|1,24",
  "0db67a79|16/12/2020||'201381|15/12/2020|Semi IQF block|Sample 3|e77fe04f|-18.9|36-40|1962|1816|154|38,4|1,3",
  "7a91cf71|16/12/2020|In Process|'201381|15/12/2020|Semi IQF block|Sample 4|e77fe04f|-19.3||1960|1868|178|43|1,3",
  "4c35e7ff|16/12/2020||'201381|15/12/2020|Semi IQF block|Sample 5|e77fe04f|-19.4|41-50|1972|1850|180|44|1,3",
  "33f924de|04/01/2021||371346|03/01/2021|Semi IQF block|Sample 1|09da63b4|-18.9|30-40|2075|2050|76|38|1,33",
  "b4df757d|04/01/2021||371346|03/01/2021|Semi IQF block|Sample 2|09da63b4|-18,8|30-40|2090|2070|74|37|",
  "92d7d389|05/01/2021||201029|20/11/2020|Semi IQF block|Sample 1|58c3c91c|-18|60-70|2430|1460|80|60|1,4",
  "a99ecda1|02/12/2020||201029|20/11/2020|Semi IQF block|Sample 2|58c3c91c|-18|60-70|2445|1490|94|63|1,4",
  "fcd6bfa0|03/12/2020||201044|01/12/2020|Semi IQF block|Sample 3|58c3c91c|-18|60-70|2210|1470|94|64|1,32",
  "073f1f10|03/12/2020||201044|01/12/2020|Semi IQF block|Sample 4|58c3c91c|-18|60-70|2215|1505|95|63|1,42",
  "42ba7e3c|06/01/2021|In Process|7|06/01/2021|Semi IQF block|Sample 1|6adebe8f||30-40|2110|1490|55|37|1,33",
  "ff58f729|06/01/2021|In Process|7|06/01/2021|Semi IQF block|Sample 2|6adebe8f|8.4|30-40|2130|1480|55|37|1,32",
  "532ed6a3|06/01/2021|In Process|7|06/01/2021|Semi IQF block|Sample 3|6adebe8f|8.9|30-40|2135|1465|55|37|1,3",
  "cc7a8ab9|07/01/2021|Defrost|'007-EN-2021|06/01/2021|Semi IQF block|Sample 4|6adebe8f|-20.2|30-40|2150|2082|54|36|1,23",
  "f9c35bf2|07/01/2021|Defrost|'007-EN-2021|06/01/2021|Semi IQF block|Sample 5|6adebe8f|-20.2|30-40|2168|1499|46|32|1,28",
  "3d7dbbc8|07/01/2021|Defrost|'007-EN-2021|06/01/2021|Semi IQF block|Sample 6|6adebe8f|-19.9|30-40|2148|1496|47|32|1,25",
  "7e7f32d1|08/01/2021|In Process|'014-EN-2021|08/01/2021|WHOLE 2 KG|Sample 7|6adebe8f|8.5|30-40|2118|1480|56|37|1,2",
  "18fb8d1e|08/01/2021|In Process|'013-EN-2021|08/01/2021|Semi IQF block|Sample 8|6adebe8f|8.5|30-40|2110|1480|55|36|1,24",
  "7ac1c3bf|08/01/2021||'0391516|07/01/2021|Semi IQF block|Sample 21|09da63b4|-18.5|30-40|2175|2080|75|36|1,23",
  "dbc6d7e5|08/01/2021||'0391516|07/01/2021|Semi IQF block|Sample 22|09da63b4|-19|30-40|2150|2045|72|35|1,19",
  "e9fbf6d4|08/01/2021||'0391516|07/01/2021|Semi IQF block|Sample 23|09da63b4|-18.5|30-40|2160|2070|72|35|1,25",
  "7ebe6f47|08/01/2021||'0371346|03/01/2021|Semi IQF block|Sample 24|09da63b4|-18.7|30-40|2155|2080|79|38|1,26",
  "d4cea83d|08/01/2021||'0371346|03/01/2021|Semi IQF block|Sample 25|09da63b4|-18|30-40|2145|2040|75|37|1,3",
  "40d801b1|08/01/2021||'0391516|07/01/2021|Semi IQF block|Sample 20|b0e64d2d|-18.9|30-40|2155|2095|71|34|1,19",
  "8600b9a7|11/01/2021|Defrost|'014-EN-2021|10/01/2021|Semi IQF block|Sample 9|6adebe8f|-19.4|30-40|2020|1512|50|32|1,3",
  "e17a5695|11/01/2021||'0371402|08/01/2021|Semi IQF block|Sample 21|b0e64d2d|-18|30-40|2160|2010|68|34|1,26"
];

const selected = { row: 8, col: "I" };
const tallRows = [7, 8];
const numberCols = ["B", "E", "F", "L", "M", "N", "O", "P"];

document.getElementById("cols").innerHTML =
  '<tr><th class="corner"></th>' +
  letters.map(l => {
    const arrow = l === "C" ? '<i class="unhide l"></i>' : l === "E" ? '<i class="unhide r"></i>' : "";
    return `<th scope="col" class="${l === selected.col ? "on" : ""}">${l}${arrow}</th>`;
  }).join("") + "</tr>";

document.getElementById("rows").innerHTML = [titles, ...data].map((line, i) => {
  const n = i + 1;
  const values = line.split("|");
  const cells = letters.map((l, c) => {
    let v = values[c] || "";
    const classes = [];
    // A leading apostrophe marks a number that is stored as text.
    if (v[0] === "'") v = v.slice(1);
    else if (n > 1 && numberCols.includes(l)) classes.push("num");
    if (n === selected.row && l === selected.col) classes.push("picked");
    return `<td class="${classes.join(" ")}">${v}</td>`;
  }).join("");
  const rowClass = n === 1 ? "head" : tallRows.includes(n) ? "tall" : "";
  return `<tr class="${rowClass}"><th scope="row" class="${n === selected.row ? "on" : ""}">${n}</th>${cells}</tr>`;
}).join("");
```
